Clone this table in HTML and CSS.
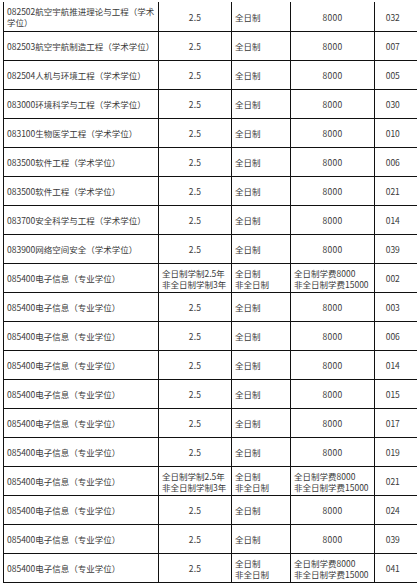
FILE: index.html
```html
<!DOCTYPE html>
<html lang="zh-CN">
<head>
<meta charset="utf-8">
<title>招生专业</title>
<link rel="stylesheet" href="styles.css">
</head>
<body>
<table class="grid">
<colgroup>
<col class="c-major">
<col class="c-years">
<col class="c-mode">
<col class="c-fee">
<col class="c-code">
</colgroup>
<tbody>
<tr class="first"><td class="major">082502航空宇航推进理论与工程（学术学位）</td><td class="mid">2.5</td><td class="left">全日制</td><td class="mid">8000</td><td class="code">032</td></tr>
<tr><td class="major">082503航空宇航制造工程（学术学位）</td><td class="mid">2.5</td><td class="left">全日制</td><td class="mid">8000</td><td class="code">007</td></tr>
<tr><td class="major">082504人机与环境工程（学术学位）</td><td class="mid">2.5</td><td class="left">全日制</td><td class="mid">8000</td><td class="code">005</td></tr>
<tr><td class="major">083000环境科学与工程（学术学位）</td><td class="mid">2.5</td><td class="left">全日制</td><td class="mid">8000</td><td class="code">030</td></tr>
<tr><td class="major">083100生物医学工程（学术学位）</td><td class="mid">2.5</td><td class="left">全日制</td><td class="mid">8000</td><td class="code">010</td></tr>
<tr><td class="major">083500软件工程（学术学位）</td><td class="mid">2.5</td><td class="left">全日制</td><td class="mid">8000</td><td class="code">006</td></tr>
<tr><td class="major">083500软件工程（学术学位）</td><td class="mid">2.5</td><td class="left">全日制</td><td class="mid">8000</td><td class="code">021</td></tr>
<tr><td class="major">083700安全科学与工程（学术学位）</td><td class="mid">2.5</td><td class="left">全日制</td><td class="mid">8000</td><td class="code">014</td></tr>
<tr><td class="major">083900网络空间安全（学术学位）</td><td class="mid">2.5</td><td class="left">全日制</td><td class="mid">8000</td><td class="code">039</td></tr>
<tr><td class="major">085400电子信息（专业学位）</td><td class="left">全日制学制2.5年<br>非全日制学制3年</td><td class="left">全日制<br>非全日制</td><td class="left">全日制学费8000<br>非全日制学费15000</td><td class="code">002</td></tr>
<tr><td class="major">085400电子信息（专业学位）</td><td class="mid">2.5</td><td class="left">全日制</td><td class="mid">8000</td><td class="code">003</td></tr>
<tr><td class="major">085400电子信息（专业学位）</td><td class="mid">2.5</td><td class="left">全日制</td><td class="mid">8000</td><td class="code">006</td></tr>
<tr><td class="major">085400电子信息（专业学位）</td><td class="mid">2.5</td><td class="left">全日制</td><td class="mid">8000</td><td class="code">014</td></tr>
<tr><td class="major">085400电子信息（专业学位）</td><td class="mid">2.5</td><td class="left">全日制</td><td class="mid">8000</td><td class="code">015</td></tr>
<tr><td class="major">085400电子信息（专业学位）</td><td class="mid">2.5</td><td class="left">全日制</td><td class="mid">8000</td><td class="code">017</td></tr>
<tr><td class="major">085400电子信息（专业学位）</td><td class="mid">2.5</td><td class="left">全日制</td><td class="mid">8000</td><td class="code">019</td></tr>
<tr><td class="major">085400电子信息（专业学位）</td><td class="left">全日制学制2.5年<br>非全日制学制3年</td><td class="left">全日制<br>非全日制</td><td class="left">全日制学费8000<br>非全日制学费15000</td><td class="code">021</td></tr>
<tr><td class="major">085400电子信息（专业学位）</td><td class="mid">2.5</td><td class="left">全日制</td><td class="mid">8000</td><td class="code">024</td></tr>
<tr><td class="major">085400电子信息（专业学位）</td><td class="mid">2.5</td><td class="left">全日制</td><td class="mid">8000</td><td class="code">039</td></tr>
<tr><td class="major">085400电子信息（专业学位）</td><td class="mid">2.5</td><td class="left">全日制<br>非全日制</td><td class="left">全日制学费8000<br>非全日制学费15000</td><td class="code">041</td></tr>
</tbody>
</table>
</body>
</html>
```
FILE: styles.css
```css
html, body {
  margin: 0;
  padding: 0;
  background: #fff;
  overflow: hidden;
}

body {
  padding: 2px 0 0 3px;
}

.grid {
  border-collapse: collapse;
  table-layout: fixed;
  width: 414px;
  font-family: "Noto Sans CJK SC", "Noto Sans", sans-serif;
  font-size: 8.5px;
  line-height: 10.5px;
  color: #3a3a3a;
}

.c-major { width: 155px; }
.c-years { width: 73px; }
.c-mode { width: 59px; }
.c-fee { width: 84px; }
.c-code { width: 43px; }

.grid tr {
  height: 29px;
}

.grid td {
  padding: 2px 3px 0;
  border: 1px solid #111;
  vertical-align: middle;
  white-space: normal;
}

.grid tr:first-child td {
  border-top: none;
}

.grid td.major {
  text-align: left;
  padding-right: 1px;
}

.grid td.mid {
  text-align: center;
  letter-spacing: 0.3px;
}

.grid td.left {
  text-align: left;
}

.grid td.code {
  text-align: center;
  padding-right: 10px;
  border-right: none;
}

.grid tr.first td.major {
  line-height: 11px;
}
```
